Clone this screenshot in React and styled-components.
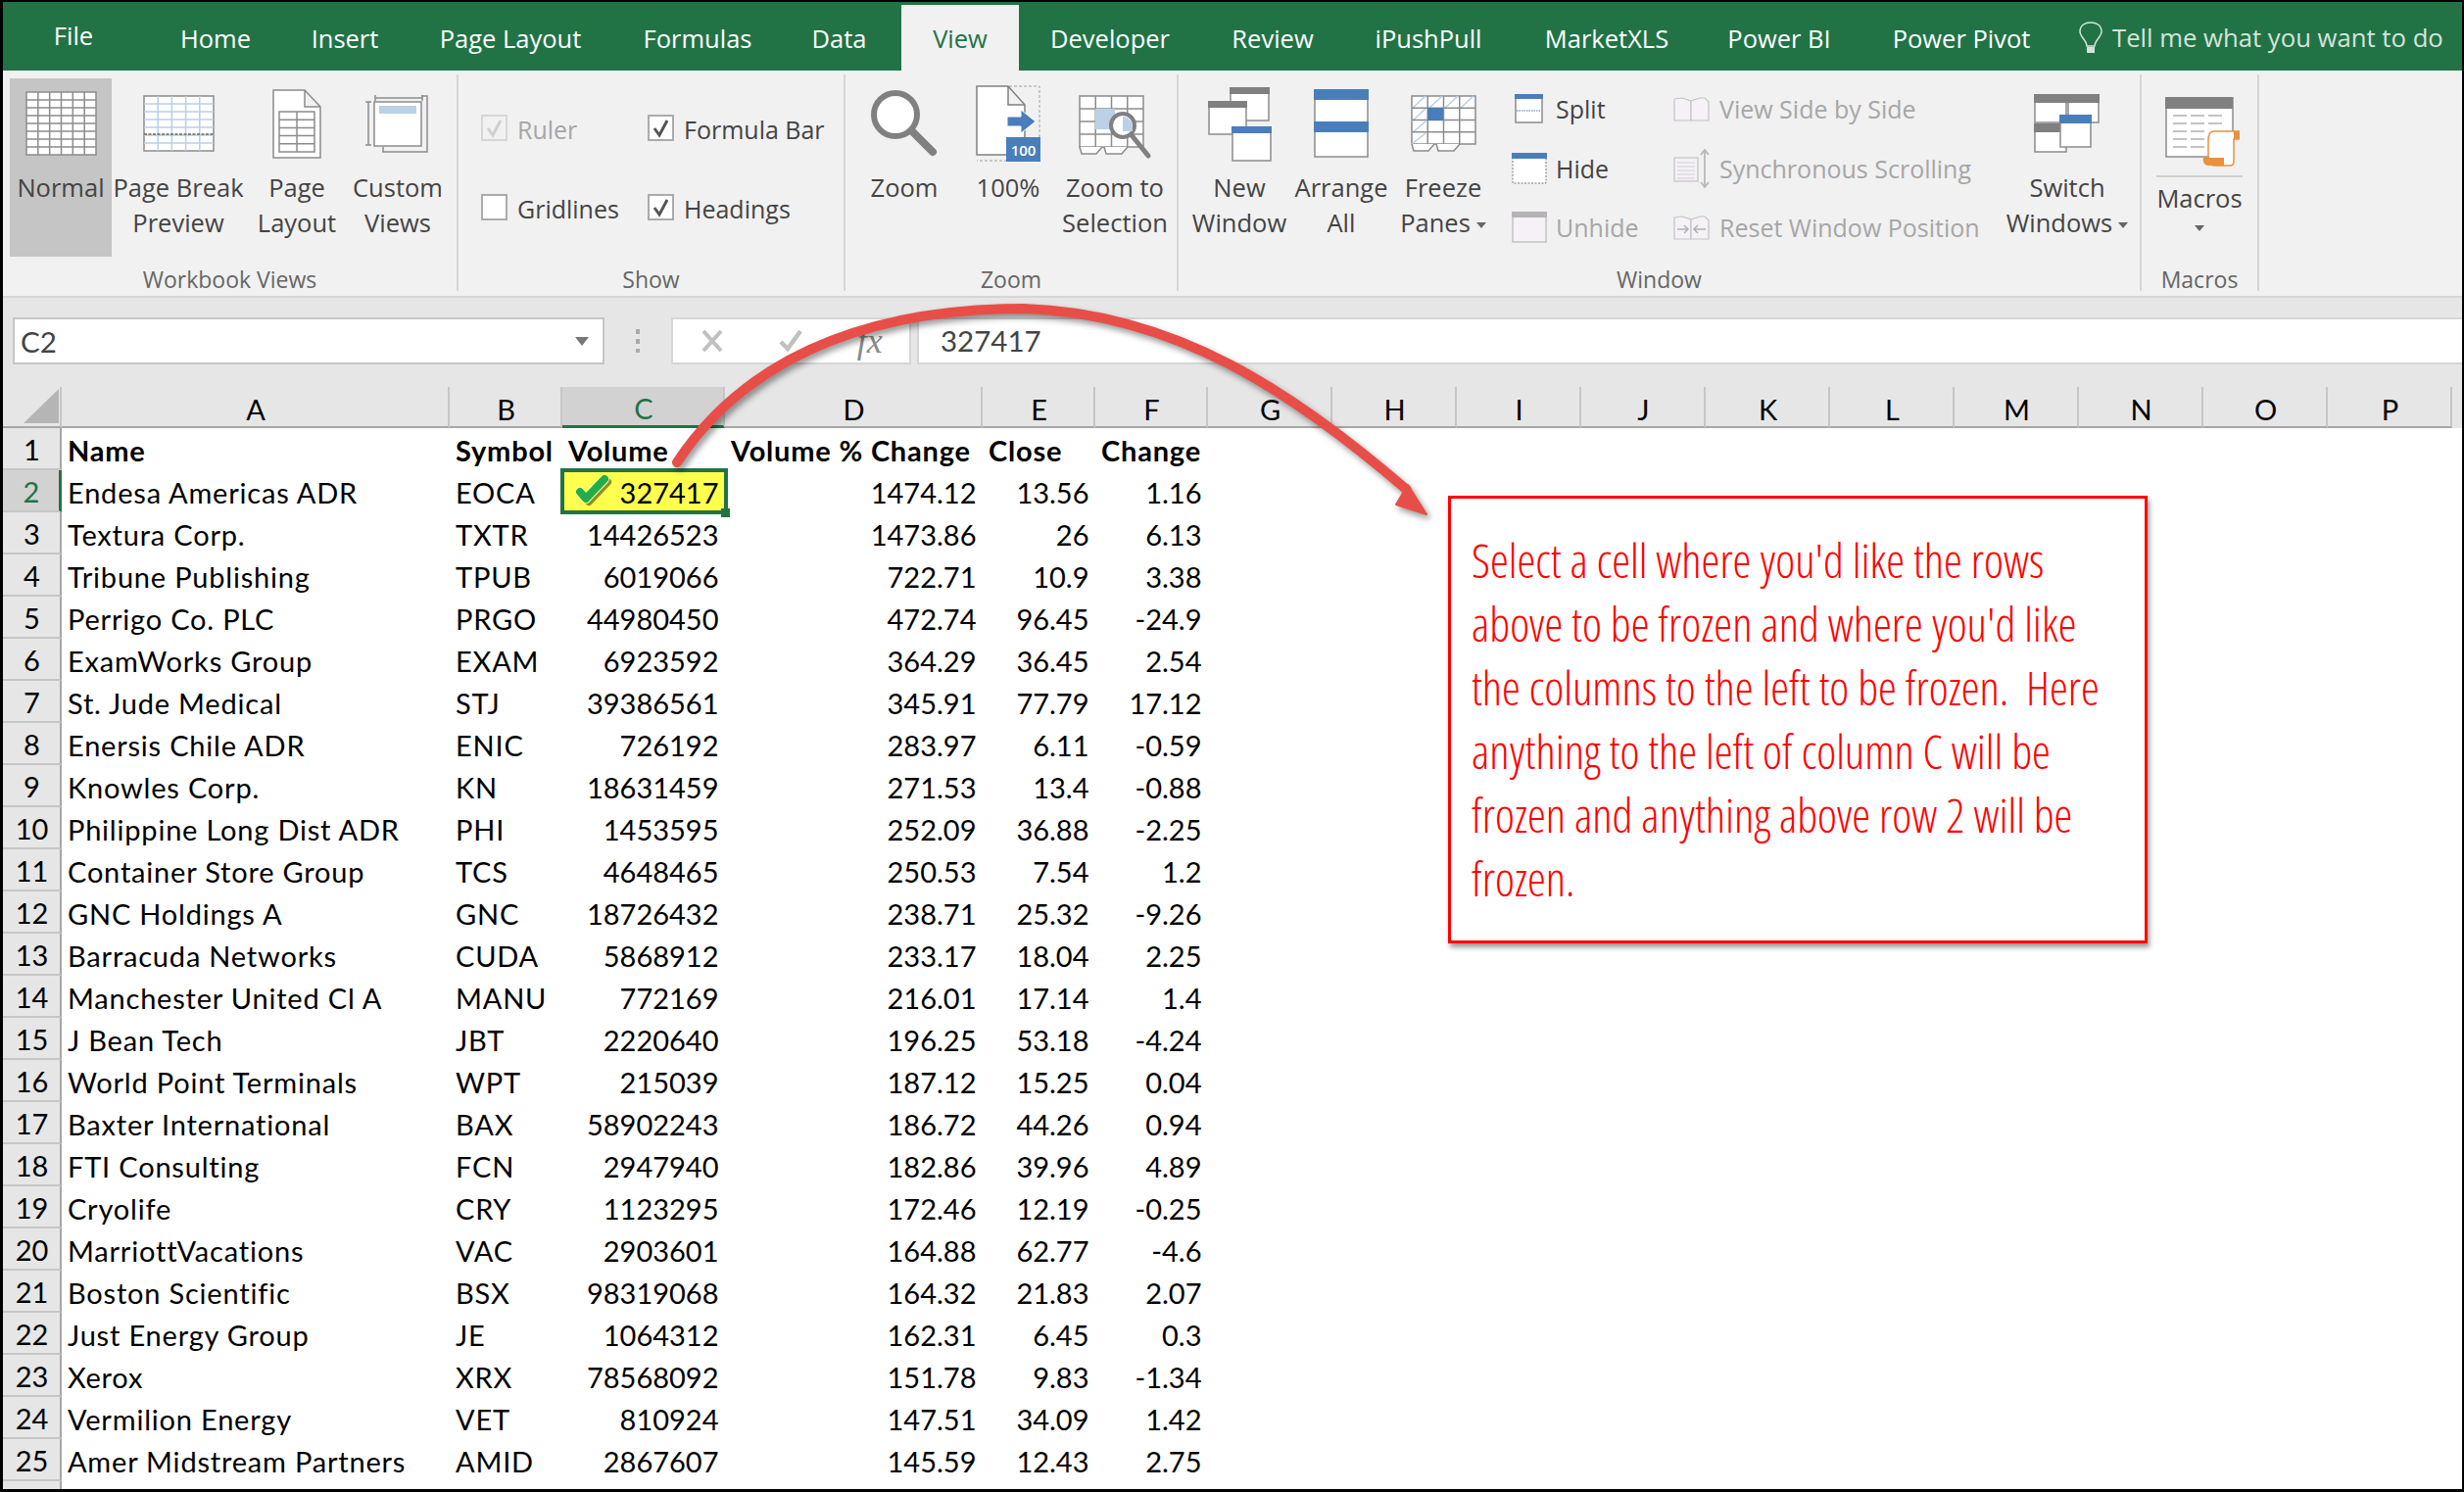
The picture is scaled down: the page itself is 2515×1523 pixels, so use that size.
import React from 'react';
import styled, { createGlobalStyle } from 'styled-components';

const green = '#217346';
const ribbonFont = '"Open Sans", "Noto Sans", sans-serif';
const gridFont = 'Lato, "Noto Sans", sans-serif';
const cols = '60px 396px 115px 166px 263px 115px 115px repeat(10, 127px)';

const tabs = [
  ['File', 144],
  ['Home', 146],
  ['Insert', 118],
  ['Page Layout', 220],
  ['Formulas', 162],
  ['Data', 127],
  ['View', 120],
  ['Developer', 186],
  ['Review', 146],
  ['iPushPull', 172],
  ['MarketXLS', 192],
  ['Power BI', 160],
  ['Power Pivot', 212]
];

const letters = ['A', 'B', 'C', 'D', 'E', 'F', 'G', 'H', 'I', 'J', 'K', 'L', 'M', 'N', 'O', 'P'];

const rows = [
  ['Endesa Americas ADR', 'EOCA', '327417', '1474.12', '13.56', '1.16'],
  ['Textura Corp.', 'TXTR', '14426523', '1473.86', '26', '6.13'],
  ['Tribune Publishing', 'TPUB', '6019066', '722.71', '10.9', '3.38'],
  ['Perrigo Co. PLC', 'PRGO', '44980450', '472.74', '96.45', '-24.9'],
  ['ExamWorks Group', 'EXAM', '6923592', '364.29', '36.45', '2.54'],
  ['St. Jude Medical', 'STJ', '39386561', '345.91', '77.79', '17.12'],
  ['Enersis Chile ADR', 'ENIC', '726192', '283.97', '6.11', '-0.59'],
  ['Knowles Corp.', 'KN', '18631459', '271.53', '13.4', '-0.88'],
  ['Philippine Long Dist ADR', 'PHI', '1453595', '252.09', '36.88', '-2.25'],
  ['Container Store Group', 'TCS', '4648465', '250.53', '7.54', '1.2'],
  ['GNC Holdings A', 'GNC', '18726432', '238.71', '25.32', '-9.26'],
  ['Barracuda Networks', 'CUDA', '5868912', '233.17', '18.04', '2.25'],
  ['Manchester United Cl A', 'MANU', '772169', '216.01', '17.14', '1.4'],
  ['J Bean Tech', 'JBT', '2220640', '196.25', '53.18', '-4.24'],
  ['World Point Terminals', 'WPT', '215039', '187.12', '15.25', '0.04'],
  ['Baxter International', 'BAX', '58902243', '186.72', '44.26', '0.94'],
  ['FTI Consulting', 'FCN', '2947940', '182.86', '39.96', '4.89'],
  ['Cryolife', 'CRY', '1123295', '172.46', '12.19', '-0.25'],
  ['MarriottVacations', 'VAC', '2903601', '164.88', '62.77', '-4.6'],
  ['Boston Scientific', 'BSX', '98319068', '164.32', '21.83', '2.07'],
  ['Just Energy Group', 'JE', '1064312', '162.31', '6.45', '0.3'],
  ['Xerox', 'XRX', '78568092', '151.78', '9.83', '-1.34'],
  ['Vermilion Energy', 'VET', '810924', '147.51', '34.09', '1.42'],
  ['Amer Midstream Partners', 'AMID', '2867607', '145.59', '12.43', '2.75']
];

const callout = [
  "Select a cell where you'd like the rows",
  "above to be frozen and where you'd like",
  'the columns to the left to be frozen.\u00a0 Here',
  'anything to the left of column C will be',
  'frozen and anything above row 2 will be',
  'frozen.'
];

const Line = ({ x1, y1, x2, y2, c = '#8c8c8c', w = 1.5, dash }) => (
  <line x1={x1} y1={y1} x2={x2} y2={y2} stroke={c} strokeWidth={w} strokeDasharray={dash} />
);

const GridLines = ({ x, y, w, h, nx, ny, c }) => (
  <>
    {Array.from({ length: nx - 1 }, (_, i) => (
      <Line key={`v${i}`} x1={x + (w / nx) * (i + 1)} y1={y} x2={x + (w / nx) * (i + 1)} y2={y + h} c={c} />
    ))}
    {Array.from({ length: ny - 1 }, (_, i) => (
      <Line key={`h${i}`} x1={x} y1={y + (h / ny) * (i + 1)} x2={x + w} y2={y + (h / ny) * (i + 1)} c={c} />
    ))}
  </>
);

const Win = ({ x, y, w, h, head, hh = 7, border = '#8c8c8c' }) => (
  <>
    <rect x={x + 1} y={y + 1} width={w - 2} height={h - 2} fill="#fff" stroke={border} strokeWidth="1.5" />
    <rect x={x} y={y} width={w} height={hh} fill={head} />
  </>
);

const blue = '#4a7eba';
const grey = '#808080';

const NormalIcon = () => (
  <Glyph $top={13} width="73" height="66" viewBox="0 0 73 66">
    <rect x="1" y="1" width="71" height="64" fill="#fff" stroke="#8c8c8c" strokeWidth="1.5" />
    <GridLines x={1} y={1} w={71} h={64} nx={6} ny={8} />
  </Glyph>
);

const PageBreakIcon = () => (
  <Glyph $top={17} width="73" height="58" viewBox="0 0 73 58">
    <rect x="1" y="1" width="71" height="56" fill="#fff" stroke="#8c8c8c" strokeWidth="1.5" />
    <GridLines x={1} y={1} w={71} h={56} nx={5} ny={7} c="#b8cfe8" />
    <Line x1={1} y1={40} x2={72} y2={40} c="#666" dash="3 1.5" />
  </Glyph>
);

const PageLayoutIcon = () => (
  <Glyph $top={11} width="50" height="71" viewBox="0 0 50 71">
    <path d="M1 1H33L49 18V70H1Z M33 1V18H49" fill="#fff" stroke="#8c8c8c" strokeWidth="1.5" />
    <rect x="7" y="23" width="36" height="41" fill="#fff" stroke="#8c8c8c" strokeWidth="1.5" />
    <GridLines x={7} y={23} w={36} h={41} nx={2} ny={5} />
  </Glyph>
);

const CustomViewsIcon = () => (
  <Glyph $top={16} width="62" height="61" viewBox="0 0 62 61">
    <path d="M8 4H56 M8 1V7 M56 1V7 M1 8V52 M-2 8H4 M-2 52H4" stroke="#8c8c8c" strokeWidth="1.5" fill="none" />
    <path d="M56 2H62V59H17V54" stroke="#8c8c8c" strokeWidth="1.5" fill="none" transform="translate(-1 0)" />
    <rect x="7" y="8" width="48" height="45" fill="#fff" stroke="#8c8c8c" strokeWidth="1.5" />
    <rect x="12" y="12" width="38" height="8" fill="#bcd0e6" />
  </Glyph>
);

const ZoomIcon = () => (
  <Glyph $top={12} width="68" height="68" viewBox="0 0 68 68">
    <circle cx="25" cy="25" r="22" fill="#fff" stroke={grey} strokeWidth="6" />
    <path d="M42 42L63 63" stroke={grey} strokeWidth="8" strokeLinecap="round" />
  </Glyph>
);

const HundredIcon = () => (
  <Glyph $top={7} width="66" height="78" viewBox="0 0 66 78">
    <path d="M34 1H65V77H1" fill="none" stroke="#a0a0a0" strokeWidth="1" strokeDasharray="3 2" />
    <path d="M1 1H33L50 20V71H1Z M33 1V20H50" fill="#fff" stroke={grey} strokeWidth="1.5" />
    <path d="M32 32H46V25L61 37L46 49V42H32Z" fill={blue} stroke="#fff" strokeWidth="1" />
    <rect x="31" y="53" width="35" height="25" fill={blue} />
    <ThumbText x="48.5" y="72">100</ThumbText>
  </Glyph>
);

const ZoomSelIcon = () => (
  <Glyph $top={17} width="74" height="64" viewBox="0 0 74 64">
    <rect x="1" y="1" width="65" height="52" fill="#fff" stroke="#8c8c8c" strokeWidth="1.5" />
    <GridLines x={1} y={1} w={65} h={52} nx={4} ny={4} />
    <rect x="17" y="14" width="20" height="21" fill="#bcd0e6" />
    <path d="M1 53L3 60H18L24 53 M26 53L28 60H44L50 53" fill="#fff" stroke="#8c8c8c" strokeWidth="1.5" />
    <circle cx="45" cy="31" r="12" fill="#fff" stroke={grey} strokeWidth="4" />
    <path d="M45 31V22A10 10 0 0 1 55 32V37H45Z" fill="#bcd0e6" />
    <path d="M54 41L71 62" stroke={grey} strokeWidth="5" strokeLinecap="round" />
  </Glyph>
);

const NewWindowIcon = () => (
  <Glyph $top={8} width="65" height="77" viewBox="0 0 65 77">
    <Win x={22} y={1} w={41} h={35} head={grey} />
    <Win x={0} y={15} w={40} h={35} head={grey} />
    <Win x={24} y={41} w={41} h={36} head={blue} />
  </Glyph>
);

const ArrangeIcon = () => (
  <Glyph $top={11} width="56" height="70" viewBox="0 0 56 70">
    <rect x="1" y="1" width="54" height="68" fill="#fff" stroke="#8c8c8c" strokeWidth="1.5" />
    <rect x="0" y="0" width="56" height="11" fill={blue} />
    <rect x="0" y="33" width="56" height="11" fill={blue} />
  </Glyph>
);

const FreezeIcon = () => (
  <Glyph $top={17} width="67" height="64" viewBox="0 0 67 64">
    <rect x="1" y="1" width="65" height="49" fill="#fff" stroke="#8c8c8c" strokeWidth="1.5" />
    <path d="M1 14L15 1 M18 14L32 1 M34 14L48 1 M50 14L64 1 M1 27L15 14 M1 39L15 27 M1 50L15 39" stroke="#b8cfe8" strokeWidth="1.5" />
    <GridLines x={1} y={1} w={65} h={49} nx={4} ny={4} />
    <rect x="17" y="13" width="16" height="13" fill={blue} />
    <path d="M1 50L3 57H18L24 50 M26 50L28 57H44L50 50" fill="#fff" stroke="#8c8c8c" strokeWidth="1.5" />
  </Glyph>
);

const SwitchIcon = () => (
  <Glyph $top={16} width="68" height="60" viewBox="0 0 68 60">
    <Win x={0} y={0} w={34} h={30} head={grey} hh={9} />
    <Win x={34} y={0} w={33} h={30} head={grey} hh={9} />
    <Win x={0} y={30} w={34} h={30} head={grey} hh={9} />
    <Win x={26} y={21} w={33} h={34} head={blue} hh={9} />
  </Glyph>
);

const MacrosIcon = () => (
  <Glyph $top={19} width="76" height="71" viewBox="0 0 76 71">
    <rect x="1" y="1" width="68" height="60" fill="#fff" stroke="#8c8c8c" strokeWidth="1.5" />
    <rect x="0" y="0" width="69" height="12" fill={grey} />
    <path d="M8 19H22 M26 19H40 M44 19H58 M8 27H22 M26 27H40 M44 27H58 M8 35H22 M26 35H40 M8 43H22 M26 43H40 M8 51H22 M26 51H40" stroke="#b0b0b0" strokeWidth="1.5" />
    <path d="M44 60V44C44 37 47 35 50 35H75V43H70V66C70 69 68 70 66 70H50C47 70 45 68 45 66Z" fill="#fff" stroke="#e8913f" strokeWidth="1.5" />
    <path d="M39 62H60V70H44C40 70 38 66 39 62Z" fill="#e8913f" />
    <path d="M70 35H76V43H70Z" fill="#e8913f" />
  </Glyph>
);

const SplitIcon = () => (
  <svg width="30" height="31" viewBox="0 0 30 31">
    <Win x={0} y={0} w={29} h={30} head={blue} hh={5} />
    <Line x1={2} y1={17} x2={27} y2={17} c={blue} w={1} dash="1.5 1" />
  </svg>
);

const HideIcon = () => (
  <svg width="36" height="32" viewBox="0 0 36 32">
    <rect x="1" y="1" width="34" height="30" fill="#fff" stroke="#777" strokeDasharray="2 1.5" />
    <rect x="0" y="0" width="36" height="6" fill={blue} />
  </svg>
);

const UnhideIcon = () => (
  <svg width="36" height="32" viewBox="0 0 36 32">
    <rect x="1" y="1" width="34" height="30" fill="#f5f1f7" stroke="#c4c4c4" strokeWidth="1.5" />
    <rect x="0" y="0" width="36" height="6" fill="#b4b4b4" />
  </svg>
);

const facing = (
  <>
    <path d="M1 2L9 1L18 4V24H1Z" fill="#f5f1f7" stroke="#c4c4c4" strokeWidth="1.2" />
    <path d="M18 4L27 1H32L36 5V24H18Z" fill="#f5f1f7" stroke="#c4c4c4" strokeWidth="1.2" />
  </>
);

const SideBySideIcon = () => (
  <svg width="37" height="25" viewBox="0 0 37 25">
    {facing}
  </svg>
);

const SyncIcon = () => (
  <svg width="38" height="40" viewBox="0 0 38 40">
    <rect x="1" y="9" width="24" height="24" fill="#f5f1f7" stroke="#c4c4c4" strokeWidth="1.2" />
    <path d="M4 14H22 M4 18H22 M4 22H22 M4 26H22 M4 30H22" stroke="#cfcfcf" />
    <path d="M32 1V39 M28 6L32 1L36 6 M28 34L32 39L36 34" fill="none" stroke="#b8b8b8" strokeWidth="1.8" />
  </svg>
);

const ResetIcon = () => (
  <svg width="37" height="25" viewBox="0 0 37 25">
    {facing}
    <path d="M4 14H14 M11 10L15 14L11 18 M33 14H22 M25 10L21 14L25 18" fill="none" stroke="#b0b0b0" strokeWidth="1.5" />
  </svg>
);

const BulbIcon = () => (
  <svg width="24" height="33" viewBox="0 0 24 33">
    <path d="M8 25C8 19 1 16 1 10C1 4 6 1 12 1C18 1 23 4 23 10C23 16 16 19 16 25Z" fill="none" stroke="#d4e4da" strokeWidth="1.5" />
    <rect x="8" y="26" width="8" height="6" fill="#d4e4da" />
  </svg>
);

const CancelIcon = () => (
  <svg width="22" height="22" viewBox="0 0 22 22">
    <path d="M2 1L20 21 M20 1L2 21" stroke="#c0c0c0" strokeWidth="4" />
  </svg>
);

const EnterIcon = () => (
  <svg width="24" height="22" viewBox="0 0 24 22">
    <path d="M2 12L9 19L22 1" fill="none" stroke="#c0c0c0" strokeWidth="4.5" />
  </svg>
);

const tickPath = 'M5 17L11 24L30 4';

const CheckMark = () => (
  <TickGlyph width="40" height="36" viewBox="0 0 40 36">
    <path d={tickPath} transform="translate(3 3)" fill="none" stroke="#8f8f18" strokeWidth="8" strokeLinecap="round" strokeLinejoin="round" />
    <path d={tickPath} fill="none" stroke="#ffffb0" strokeWidth="10" strokeLinecap="round" strokeLinejoin="round" />
    <path d={tickPath} fill="none" stroke="#1fae4a" strokeWidth="8" strokeLinecap="round" strokeLinejoin="round" />
  </TickGlyph>
);

const App = () => (
  <>
    <GlobalStyle />
    <Frame>
      <Screen>
        <TabBar>
          {tabs.map(([label, width]) => (
            <Tab key={label} $width={width} $active={label === 'View'} $raised={label === 'File'}>
              {label}
            </Tab>
          ))}
          <TellMe>
            <BulbIcon />
            <span>Tell me what you want to do</span>
          </TellMe>
        </TabBar>

        <Ribbon>
          <Group $width={465}>
            <GroupBody $pad={7}>
              <BigButton $width={104} $on>
                <IconSlot><NormalIcon /></IconSlot>
                <span>Normal</span>
              </BigButton>
              <BigButton $width={136}>
                <IconSlot><PageBreakIcon /></IconSlot>
                <span>Page Break</span>
                <span>Preview</span>
              </BigButton>
              <BigButton $width={106}>
                <IconSlot><PageLayoutIcon /></IconSlot>
                <span>Page</span>
                <span>Layout</span>
              </BigButton>
              <BigButton $width={100}>
                <IconSlot><CustomViewsIcon /></IconSlot>
                <span>Custom</span>
                <span>Views</span>
              </BigButton>
            </GroupBody>
            <GroupLabel>Workbook Views</GroupLabel>
          </Group>

          <Group $width={395}>
            <ChecksGrid>
              <Check $off $ticked>Ruler</Check>
              <Check $ticked>Formula Bar</Check>
              <Check>Gridlines</Check>
              <Check $ticked>Headings</Check>
            </ChecksGrid>
            <GroupLabel>Show</GroupLabel>
          </Group>

          <Group $width={340}>
            <GroupBody $pad={6}>
              <BigButton $width={108}>
                <IconSlot><ZoomIcon /></IconSlot>
                <span>Zoom</span>
              </BigButton>
              <BigButton $width={104}>
                <IconSlot><HundredIcon /></IconSlot>
                <span>100%</span>
              </BigButton>
              <BigButton $width={114}>
                <IconSlot><ZoomSelIcon /></IconSlot>
                <span>Zoom to</span>
                <span>Selection</span>
              </BigButton>
            </GroupBody>
            <GroupLabel>Zoom</GroupLabel>
          </Group>

          <Group $width={983}>
            <GroupBody $pad={15}>
              <BigButton $width={94}>
                <IconSlot><NewWindowIcon /></IconSlot>
                <span>New</span>
                <span>Window</span>
              </BigButton>
              <BigButton $width={114}>
                <IconSlot><ArrangeIcon /></IconSlot>
                <span>Arrange</span>
                <span>All</span>
              </BigButton>
              <BigButton $width={94}>
                <IconSlot><FreezeIcon /></IconSlot>
                <span>Freeze</span>
                <span>Panes<Caret /></span>
              </BigButton>
              <SmallColumn $width={188} $pad={23}>
                <SmallRow><SmallSlot $slot={45} $indent={3}><SplitIcon /></SmallSlot>Split</SmallRow>
                <SmallRow><SmallSlot $slot={45}><HideIcon /></SmallSlot>Hide</SmallRow>
                <SmallRow $off><SmallSlot $slot={45}><UnhideIcon /></SmallSlot>Unhide</SmallRow>
              </SmallColumn>
              <SmallColumn $width={332}>
                <SmallRow $off><SmallSlot $slot={47}><SideBySideIcon /></SmallSlot>View Side by Side</SmallRow>
                <SmallRow $off><SmallSlot $slot={47}><SyncIcon /></SmallSlot>Synchronous Scrolling</SmallRow>
                <SmallRow $off><SmallSlot $slot={47}><ResetIcon /></SmallSlot>Reset Window Position</SmallRow>
              </SmallColumn>
              <BigButton $width={140}>
                <IconSlot><SwitchIcon /></IconSlot>
                <span>Switch</span>
                <span>Windows<Caret /></span>
              </BigButton>
            </GroupBody>
            <GroupLabel>Window</GroupLabel>
          </Group>

          <Group $width={120}>
            <GroupBody>
              <BigButton $width={118}>
                <MacroSlot><MacrosIcon /></MacroSlot>
                <MacroText>Macros</MacroText>
                <Caret $alone />
              </BigButton>
            </GroupBody>
            <GroupLabel>Macros</GroupLabel>
          </Group>
        </Ribbon>

        <FormulaArea>
          <NameBox>
            <span>C2</span>
            <NameCaret />
          </NameBox>
          <Grip />
          <FxBox>
            <FxSlot><CancelIcon /></FxSlot>
            <FxSlot><EnterIcon /></FxSlot>
            <FxSlot $serif>fx</FxSlot>
          </FxBox>
          <FormulaInput>327417</FormulaInput>
        </FormulaArea>

        <Sheet>
          <HeadRow>
            <Corner>
              <svg width="36" height="35" viewBox="0 0 36 35">
                <path d="M36 0V35H0Z" fill="#b5b5b5" />
              </svg>
            </Corner>
            {letters.map((letter) => (
              <ColHead key={letter} $on={letter === 'C'}>{letter}</ColHead>
            ))}
          </HeadRow>
          <Row>
            <RowNum>1</RowNum>
            <Cell $bold>Name</Cell>
            <Cell $bold>Symbol</Cell>
            <Cell $bold>Volume</Cell>
            <Cell $bold>Volume % Change</Cell>
            <Cell $bold>Close</Cell>
            <Cell $bold>Change</Cell>
          </Row>
          {rows.map((row, i) => (
            <Row key={row[1]}>
              <RowNum $on={i === 0}>{i + 2}</RowNum>
              <Cell>{row[0]}</Cell>
              <Cell>{row[1]}</Cell>
              {i === 0 ? (
                <ActiveCell $num>
                  <CheckMark />
                  {row[2]}
                </ActiveCell>
              ) : (
                <Cell $num>{row[2]}</Cell>
              )}
              <Cell $num>{row[3]}</Cell>
              <Cell $num>{row[4]}</Cell>
              <Cell $num>{row[5]}</Cell>
            </Row>
          ))}
          <Row>
            <RowNum />
          </Row>
        </Sheet>
      </Screen>

      <ArrowLayer width="830" height="260" viewBox="660 290 830 260">
        <path d="M691 472C755 375 870 315 1045 315C1200 320 1320 400 1436 500" fill="none" stroke="#e84e48" strokeWidth="10" strokeLinecap="round" />
        <path d="M1437 495L1456 525L1425 515Z" fill="#e84e48" stroke="#e84e48" strokeWidth="2" strokeLinejoin="round" />
      </ArrowLayer>

      <Callout>
        {callout.map((line) => (
          <CalloutLine key={line}>{line}</CalloutLine>
        ))}
      </Callout>
    </Frame>
  </>
);

const GlobalStyle = createGlobalStyle`
  html, body {
    margin: 0;
    background: #000;
  }
`;

const Frame = styled.div`
  position: relative;
  box-sizing: border-box;
  width: 2515px;
  height: 1523px;
  padding: 2px 2px 3px 3px;
  background: #000;
  overflow: hidden;
`;

const Screen = styled.div`
  display: flex;
  flex-direction: column;
  height: 100%;
  background: #fff;
  overflow: hidden;
`;

const TabBar = styled.div`
  display: flex;
  align-items: flex-end;
  flex: none;
  height: 70px;
  background: ${green};
  font-family: ${ribbonFont};
  font-size: 25.5px;
  color: #fff;
`;

const Tab = styled.div`
  display: flex;
  align-items: center;
  justify-content: center;
  box-sizing: border-box;
  width: ${({ $width }) => $width}px;
  height: 67px;
  padding-bottom: ${({ $raised }) => ($raised ? 6 : 0)}px;
  background: ${({ $active }) => ($active ? '#f1f1f1' : 'transparent')};
  color: ${({ $active }) => ($active ? green : '#fff')};
`;

const TellMe = styled.div`
  display: flex;
  align-items: center;
  gap: 10px;
  height: 67px;
  margin-left: 14px;
  font-size: 25.7px;
  color: #d4e4da;
  white-space: nowrap;
`;

const Ribbon = styled.div`
  display: flex;
  flex: none;
  box-sizing: border-box;
  height: 230px;
  padding-top: 4px;
  background: #f1f1f1;
  font-family: ${ribbonFont};
  font-size: 25.5px;
  color: #444;
`;

const Group = styled.section`
  display: flex;
  flex-direction: column;
  box-sizing: border-box;
  width: ${({ $width }) => $width}px;
  height: 221px;
  padding-top: 4px;
  border-right: 2px solid #d6d6d6;
`;

const GroupBody = styled.div`
  display: flex;
  flex: 1;
  min-height: 0;
  padding-left: ${({ $pad }) => $pad || 0}px;
`;

const GroupLabel = styled.div`
  flex: none;
  height: 22px;
  margin-bottom: 1px;
  line-height: 22px;
  font-size: 23px;
  color: #666;
  text-align: center;
`;

const BigButton = styled.div`
  display: flex;
  flex-direction: column;
  align-items: center;
  flex: none;
  width: ${({ $width }) => $width}px;
  height: 182px;
  line-height: 36px;
  background: ${({ $on }) => ($on ? '#c5c5c5' : 'transparent')};
  white-space: nowrap;
`;

const IconSlot = styled.div`
  flex: none;
  height: 93px;
`;

const MacroSlot = styled.div`
  flex: none;
  box-sizing: border-box;
  width: 88px;
  height: 101px;
  padding-left: 9px;
  border-bottom: 2px solid #d0d0d0;
`;

const MacroText = styled.span`
  margin-top: 3px;
`;

const Glyph = styled.svg`
  display: block;
  margin-top: ${({ $top }) => $top}px;
  overflow: visible;
`;

const ThumbText = styled.text`
  font-family: ${ribbonFont};
  font-size: 15px;
  font-weight: 600;
  fill: #fff;
  text-anchor: middle;
`;

const Caret = styled.i`
  display: ${({ $alone }) => ($alone ? 'block' : 'inline-block')};
  margin: ${({ $alone }) => ($alone ? '10px 0 0' : '0 0 4px 6px')};
  border-left: 5px solid transparent;
  border-right: 5px solid transparent;
  border-top: 6px solid #666;
`;

const ChecksGrid = styled.div`
  display: grid;
  grid-template-columns: 170px 1fr;
  grid-auto-rows: 81px;
  align-content: start;
  flex: 1;
  min-height: 0;
  padding: 37px 0 0 23px;
  font-size: 25px;
`;

const CheckRow = styled.label`
  display: flex;
  align-items: flex-start;
  gap: 10px;
  line-height: 30px;
  color: ${({ $off }) => ($off ? '#a6a6a6' : '#444')};
  white-space: nowrap;
`;

const CheckBox = styled.span`
  display: flex;
  align-items: center;
  justify-content: center;
  box-sizing: border-box;
  width: 27px;
  height: 27px;
  background: ${({ $off }) => ($off ? '#f1f1f1' : '#fff')};
  border: 2px solid ${({ $off }) => ($off ? '#d6d6d6' : '#ababab')};
`;

const Check = ({ children, $off, $ticked }) => (
  <CheckRow $off={$off}>
    <CheckBox $off={$off}>
      {$ticked && (
        <svg width="18" height="20" viewBox="0 0 18 20">
          <path d="M2 10L7 17L15 2" fill="none" stroke={$off ? '#cfcfcf' : '#555'} strokeWidth="3" />
        </svg>
      )}
    </CheckBox>
    {children}
  </CheckRow>
);

const SmallColumn = styled.div`
  display: flex;
  flex-direction: column;
  flex: none;
  box-sizing: border-box;
  width: ${({ $width }) => $width}px;
  padding-left: ${({ $pad }) => $pad || 0}px;
  padding-top: 1px;
  font-size: 25px;
`;

const SmallRow = styled.div`
  display: flex;
  align-items: center;
  height: 60.5px;
  color: ${({ $off }) => ($off ? '#a6a6a6' : '#444')};
  white-space: nowrap;
`;

const SmallSlot = styled.div`
  display: flex;
  align-items: center;
  flex: none;
  box-sizing: border-box;
  width: ${({ $slot }) => $slot}px;
  padding-left: ${({ $indent }) => $indent || 0}px;
`;

const FormulaArea = styled.div`
  display: flex;
  flex: none;
  box-sizing: border-box;
  height: 93px;
  padding-top: 20px;
  background: #e6e6e6;
  border-top: 2px solid #d6d6d6;
  font-family: ${gridFont};
  font-size: 29.5px;
  color: #444;
`;

const NameBox = styled.div`
  display: flex;
  align-items: center;
  justify-content: space-between;
  box-sizing: border-box;
  width: 604px;
  height: 48px;
  margin-left: 10px;
  padding: 0 14px 0 6px;
  background: #fff;
  border: 2px solid #c6c6c6;
`;

const NameCaret = styled.i`
  border-left: 7px solid transparent;
  border-right: 7px solid transparent;
  border-top: 9px solid #777;
`;

const Grip = styled.div`
  flex: none;
  width: 4px;
  height: 24px;
  margin: 12px 32px 0 32px;
  background: repeating-linear-gradient(#aaa 0 5px, transparent 5px 10px);
`;

const FxBox = styled.div`
  display: flex;
  align-items: center;
  box-sizing: border-box;
  flex: none;
  width: 245px;
  height: 48px;
  background: #fff;
  border: 2px solid #d6d6d6;
`;

const FxSlot = styled.span`
  display: flex;
  justify-content: center;
  width: 81px;
  font-family: "Liberation Serif", serif;
  font-style: italic;
  font-size: 36px;
  color: #8a8a8a;
`;

const FormulaInput = styled.div`
  flex: 1;
  box-sizing: border-box;
  height: 48px;
  margin-left: 6px;
  padding-left: 22px;
  line-height: 44px;
  background: #fff;
  border: 2px solid #d6d6d6;
  border-right: 0;
`;

const Sheet = styled.div`
  flex: 1;
  min-height: 0;
  overflow: hidden;
  font-family: ${gridFont};
  font-size: 29px;
  color: #000;
`;

const HeadRow = styled.div`
  display: grid;
  grid-template-columns: ${cols};
  height: 42px;
  background: #e6e6e6;
`;

const Corner = styled.div`
  display: flex;
  align-items: flex-end;
  justify-content: flex-end;
  padding: 0 1px 3px 0;
  box-sizing: border-box;
  border-right: 2px solid #c6c6c6;
  border-bottom: 2px solid #a6a6a6;
`;

const ColHead = styled.div`
  display: flex;
  align-items: center;
  justify-content: center;
  box-sizing: border-box;
  padding: 4px 0 0 2px;
  background: ${({ $on }) => ($on ? '#d2d2d2' : 'transparent')};
  color: ${({ $on }) => ($on ? green : '#000')};
  border-right: 2px solid #c6c6c6;
  border-bottom: ${({ $on }) => ($on ? `3px solid ${green}` : '2px solid #a6a6a6')};
`;

const Row = styled.div`
  display: grid;
  grid-template-columns: ${cols};
  height: 43px;
`;

const RowNum = styled.div`
  display: flex;
  align-items: center;
  justify-content: center;
  box-sizing: border-box;
  padding: 2px 0 0 1px;
  background: ${({ $on }) => ($on ? '#d2d2d2' : '#e6e6e6')};
  color: ${({ $on }) => ($on ? green : '#000')};
  border-bottom: 2px solid #c6c6c6;
  border-right: ${({ $on }) => ($on ? `3px solid ${green}` : '2px solid #a6a6a6')};
`;

const Cell = styled.div`
  display: flex;
  align-items: center;
  justify-content: ${({ $num }) => ($num ? 'flex-end' : 'flex-start')};
  padding: 2px ${({ $num }) => ($num ? 6.5 : 6)}px 0;
  font-weight: ${({ $bold }) => ($bold ? 700 : 400)};
  letter-spacing: ${({ $num }) => ($num ? 0 : 0.8)}px;
  white-space: nowrap;
  min-width: 0;
`;

const ActiveCell = styled(Cell)`
  position: relative;
  background: #ffff4d;

  &::before {
    content: '';
    position: absolute;
    inset: -2px -3px -2px -2px;
    border: 4px solid ${green};
  }

  &::after {
    content: '';
    position: absolute;
    right: -5px;
    bottom: -5px;
    width: 9px;
    height: 9px;
    background: ${green};
  }
`;

const TickGlyph = styled.svg`
  position: absolute;
  left: 13px;
  top: 5px;
`;

const ArrowLayer = styled.svg`
  position: absolute;
  left: 660px;
  top: 290px;
  overflow: visible;
  pointer-events: none;
  filter: drop-shadow(3px 4px 3px rgba(0, 0, 0, 0.4));
`;

const Callout = styled.div`
  position: absolute;
  left: 1478px;
  top: 506px;
  box-sizing: border-box;
  width: 714px;
  height: 457px;
  padding: 30px 0 0 21px;
  background: #fff;
  border: 3px solid #ff0000;
  box-shadow: 2px 4px 5px rgba(0, 0, 0, 0.4);
  font-family: "Open Sans", sans-serif;
  font-stretch: condensed;
  font-weight: 300;
  font-size: 47.6px;
  line-height: 65px;
  color: #ff0000;
`;

const CalloutLine = styled.div`
  white-space: nowrap;
`;

export default App;
